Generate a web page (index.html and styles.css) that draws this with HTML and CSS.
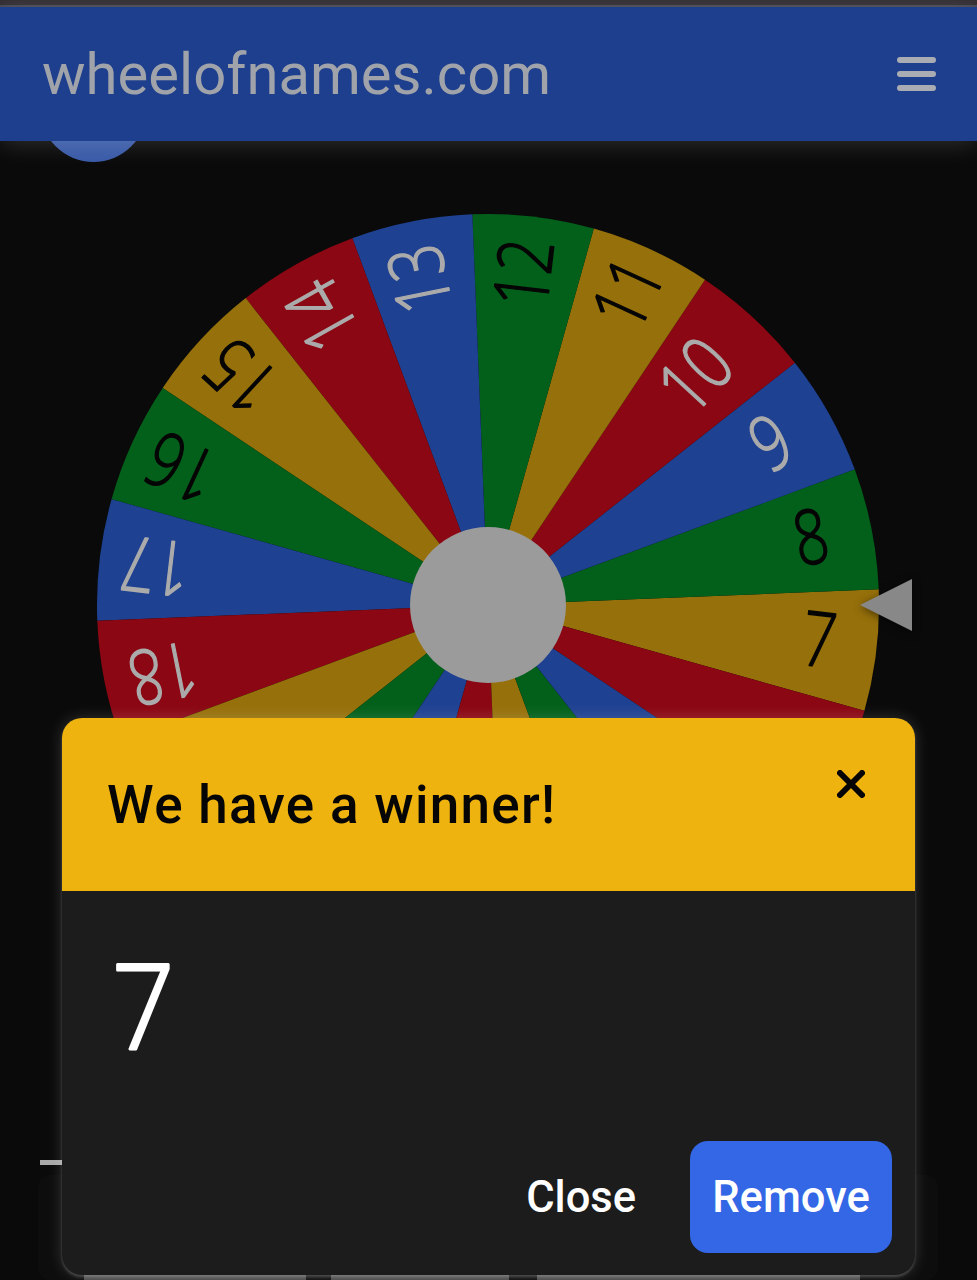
FILE: index.html
```html
<!DOCTYPE html>
<html>
<head>
<meta charset="utf-8"/>
<title>wheelofnames.com</title>
<link rel="stylesheet" href="styles.css">
</head>
<body>
<div class="status-strip"></div>

<header class="topbar">
  <span class="brand">wheelofnames.com</span>
  <span class="burger"><i></i><i></i><i></i></span>
</header>

<div class="fab"></div>

<main class="stage">
  <svg class="wheel" width="977" height="1120" viewBox="0 0 977 1120">
    <defs>
      <path id="slice" d="M0 0L386.2 -61.2A391 391 0 0 1 386.2 61.2Z"/>
    </defs>
    <g transform="translate(488 464)">
      <g class="gold" transform="rotate(6.7)"><use href="#slice"/><text class="dark" x="427" y="-7">7</text></g>
      <g class="green" transform="rotate(-11.3)"><use href="#slice"/><text class="dark" x="423" y="-6">8</text></g>
      <g class="blue" transform="rotate(-29.3)"><use href="#slice"/><text class="light" x="418" y="-6">9</text></g>
      <g class="red" transform="rotate(-47.3)"><use href="#slice"/><text class="light" x="397" y="-6">10</text></g>
      <g class="gold" transform="rotate(-65.3)"><use href="#slice"/><text class="dark" x="438" y="-6">11</text></g>
      <g class="green" transform="rotate(-83.3)"><use href="#slice"/><text class="dark" x="428" y="-6">12</text></g>
      <g class="blue" transform="rotate(-101.3)"><use href="#slice"/><text class="light" x="427" y="-6">13</text></g>
      <g class="red" transform="rotate(-119.3)"><use href="#slice"/><text class="light" x="428" y="-6">14</text></g>
      <g class="gold" transform="rotate(-137.3)"><use href="#slice"/><text class="dark" x="432" y="-2">15</text></g>
      <g class="green" transform="rotate(-155.3)"><use href="#slice"/><text class="dark" x="431" y="-6">16</text></g>
      <g class="blue" transform="rotate(-173.3)"><use href="#slice"/><text class="light" x="430" y="-3">17</text></g>
      <g class="red" transform="rotate(-191.3)"><use href="#slice"/><text class="light" x="426" y="-6">18</text></g>
      <g class="gold" transform="rotate(-209.3)"><use href="#slice"/></g>
      <g class="green" transform="rotate(-227.3)"><use href="#slice"/></g>
      <g class="blue" transform="rotate(-245.3)"><use href="#slice"/></g>
      <g class="red" transform="rotate(-263.3)"><use href="#slice"/></g>
      <g class="gold" transform="rotate(-281.3)"><use href="#slice"/></g>
      <g class="green" transform="rotate(-299.3)"><use href="#slice"/></g>
      <g class="blue" transform="rotate(-317.3)"><use href="#slice"/></g>
      <g class="red" transform="rotate(-335.3)"><use href="#slice"/></g>
      <circle class="hub" r="78"/>
      <path class="pointer" d="M372 0L424 -26V26Z"/>
    </g>
  </svg>
</main>

<div class="dash"></div>
<div class="under-card">
  <span class="under-seg seg-a"></span>
  <span class="under-seg seg-b"></span>
  <span class="under-seg seg-c"></span>
</div>

<section class="dialog">
  <div class="dialog-head">
    <h2>We have a winner!</h2>
    <svg class="close-x" width="28" height="28" viewBox="0 0 28 28"><path d="M3 3L25 25M25 3L3 25"/></svg>
  </div>
  <div class="dialog-body">
    <svg class="winner" width="120" height="166" viewBox="0 0 120 166"><text x="4" y="128">7</text></svg>
    <div class="actions">
      <button class="btn-plain">Close</button>
      <button class="btn-primary">Remove</button>
    </div>
  </div>
</section>
</body>
</html>
```

FILE: styles.css
```css
html, body {
  margin: 0;
  height: 1280px;
  overflow: hidden;
  background-color: #0a0a0a;
  font-family: Roboto, sans-serif;
}

body {
  position: relative;
}

.status-strip {
  height: 5px;
  background-color: #2f2b31;
  border-bottom: 2px solid #454550;
}

.topbar {
  position: relative;
  z-index: 2;
  height: 134px;
  background-color: #1e3f8d;
  display: flex;
  align-items: center;
  justify-content: space-between;
  padding: 0 41px 0 42px;
  box-shadow: 0 2px 24px rgba(255, 255, 255, 0.16);
}

.brand {
  font-size: 58px;
  color: #a0a4aa;
}

.burger {
  display: flex;
  flex-direction: column;
  gap: 8px;
  width: 39px;
}

.burger i {
  display: block;
  height: 6px;
  border-radius: 3px;
  background-color: #a9acb2;
}

.fab {
  position: absolute;
  left: 40px;
  top: 55px;
  width: 107px;
  height: 107px;
  border-radius: 50%;
  background-color: #3a5ba8;
  z-index: 1;
}

.stage {
  height: 1139px;
}

.wheel {
  display: block;
}

.wheel text {
  font-family: "Open Sans", sans-serif;
  font-size: 76px;
  font-weight: 300;
  text-anchor: middle;
  dominant-baseline: central;
  transform: scale(0.78, 1);
  stroke-width: 1.5px;
  stroke-linejoin: round;
}

.light { fill: #ababab; stroke: #ababab; }
.dark { fill: #050505; stroke: #050505; }

.gold use { fill: #96700a; }
.green use { fill: #03601a; }
.blue use { fill: #1f4191; }
.red use { fill: #8a0713; }

.hub {
  fill: #9b9b9b;
}

.pointer {
  fill: #888;
  filter: drop-shadow(0 2px 4px rgba(0, 0, 0, 0.5));
}

.dash {
  position: absolute;
  left: 40px;
  top: 1160px;
  width: 22px;
  height: 5px;
  background-color: #a9a9a9;
}

.under-card {
  position: absolute;
  left: 38px;
  top: 1175px;
  width: 900px;
  height: 105px;
  border-radius: 12px;
  background-color: #0d0d0d;
}

.under-seg {
  position: absolute;
  top: 100px;
  height: 5px;
  background-color: #4c4c4c;
}

.seg-a { left: 46px; width: 222px; }
.seg-b { left: 293px; width: 178px; }
.seg-c { left: 499px; width: 323px; }

.dialog {
  position: absolute;
  left: 62px;
  top: 718px;
  width: 853px;
  height: 557px;
  border-radius: 20px;
  overflow: hidden;
  background-color: #1c1c1c;
  display: flex;
  flex-direction: column;
  box-shadow: 0 0 16px rgba(255, 255, 255, 0.17), 0 2px 3px rgba(255, 255, 255, 0.2);
}

.dialog-head {
  height: 173px;
  background-color: #efb30f;
  display: flex;
  justify-content: space-between;
  padding: 0 50px 0 45px;
}

.dialog-head h2 {
  margin: 55px 0 0;
  font-size: 53px;
  font-weight: 500;
  letter-spacing: 1.3px;
  line-height: 64px;
  color: #050505;
}

.close-x {
  margin-top: 52px;
}

.close-x path {
  fill: none;
  stroke: #050505;
  stroke-width: 6;
  stroke-linecap: round;
}

.dialog-body {
  flex: 1;
  display: flex;
  flex-direction: column;
  justify-content: space-between;
  padding: 0 23px 22px 46px;
}

.winner {
  display: block;
  margin-top: 30px;
}

.winner text {
  font-family: "Open Sans", sans-serif;
  font-size: 118px;
  font-weight: 300;
  transform: scale(0.93, 1);
  fill: #fff;
  stroke: #fff;
  stroke-width: 3px;
  stroke-linejoin: round;
}

.actions {
  display: flex;
  justify-content: flex-end;
  align-items: center;
  gap: 54px;
}

.actions button {
  border: none;
  font-family: Roboto, sans-serif;
  font-size: 43.5px;
  font-weight: 500;
  color: #fff;
  background: none;
  padding: 0;
}

.actions .btn-primary {
  width: 202px;
  height: 112px;
  border-radius: 18px;
  background-color: #3367e6;
}
```
